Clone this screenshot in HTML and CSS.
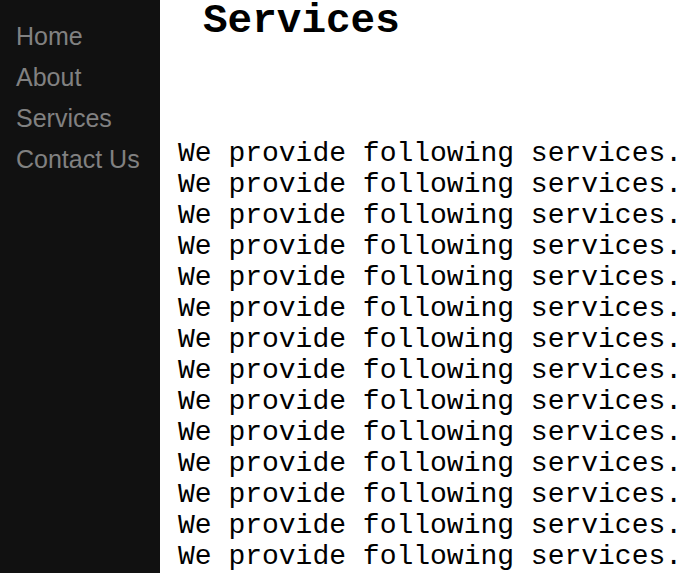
FILE: index.html
```html
<!DOCTYPE html>
<html>
<head>
<meta charset="utf-8">
<link rel="stylesheet" href="styles.css">
</head>
<body>
<div class="page">
  <nav class="sidenav">
    <a href="#">Home</a>
    <a href="#">About</a>
    <a href="#">Services</a>
    <a href="#">Contact Us</a>
  </nav>
  <main class="main">
    <h1 class="title">Services</h1>
    <div class="lines">
      <div>We provide following services.</div>
      <div>We provide following services.</div>
      <div>We provide following services.</div>
      <div>We provide following services.</div>
      <div>We provide following services.</div>
      <div>We provide following services.</div>
      <div>We provide following services.</div>
      <div>We provide following services.</div>
      <div>We provide following services.</div>
      <div>We provide following services.</div>
      <div>We provide following services.</div>
      <div>We provide following services.</div>
      <div>We provide following services.</div>
      <div>We provide following services.</div>
    </div>
  </main>
</div>
</body>
</html>
```
FILE: styles.css
```css
html, body {
  margin: 0;
  padding: 0;
  background: #fff;
}
.page {
  display: flex;
  min-height: 100vh;
}
.sidenav {
  width: 160px;
  flex: none;
  background: #111111;
  padding-top: 16px;
  display: flex;
  flex-direction: column;
}
.sidenav a {
  display: block;
  padding: 6px 8px 6px 16px;
  font-family: "Liberation Sans", Arial, sans-serif;
  font-size: 25px;
  line-height: 29px;
  color: #818181;
  text-decoration: none;
}
.main {
  flex: 1;
  padding-left: 18px;
  font-family: "Courier New", Courier, "Nimbus Mono PS", "Nimbus Mono L", FreeMono, "Liberation Mono", monospace;
  color: #000;
}
.title {
  margin: 0 0 0 25px;
  font-size: 41px;
  line-height: 42px;
  font-weight: bold;
}
.lines {
  margin-top: 96px;
  font-size: 28px;
  line-height: 31px;
  white-space: nowrap;
}
```
